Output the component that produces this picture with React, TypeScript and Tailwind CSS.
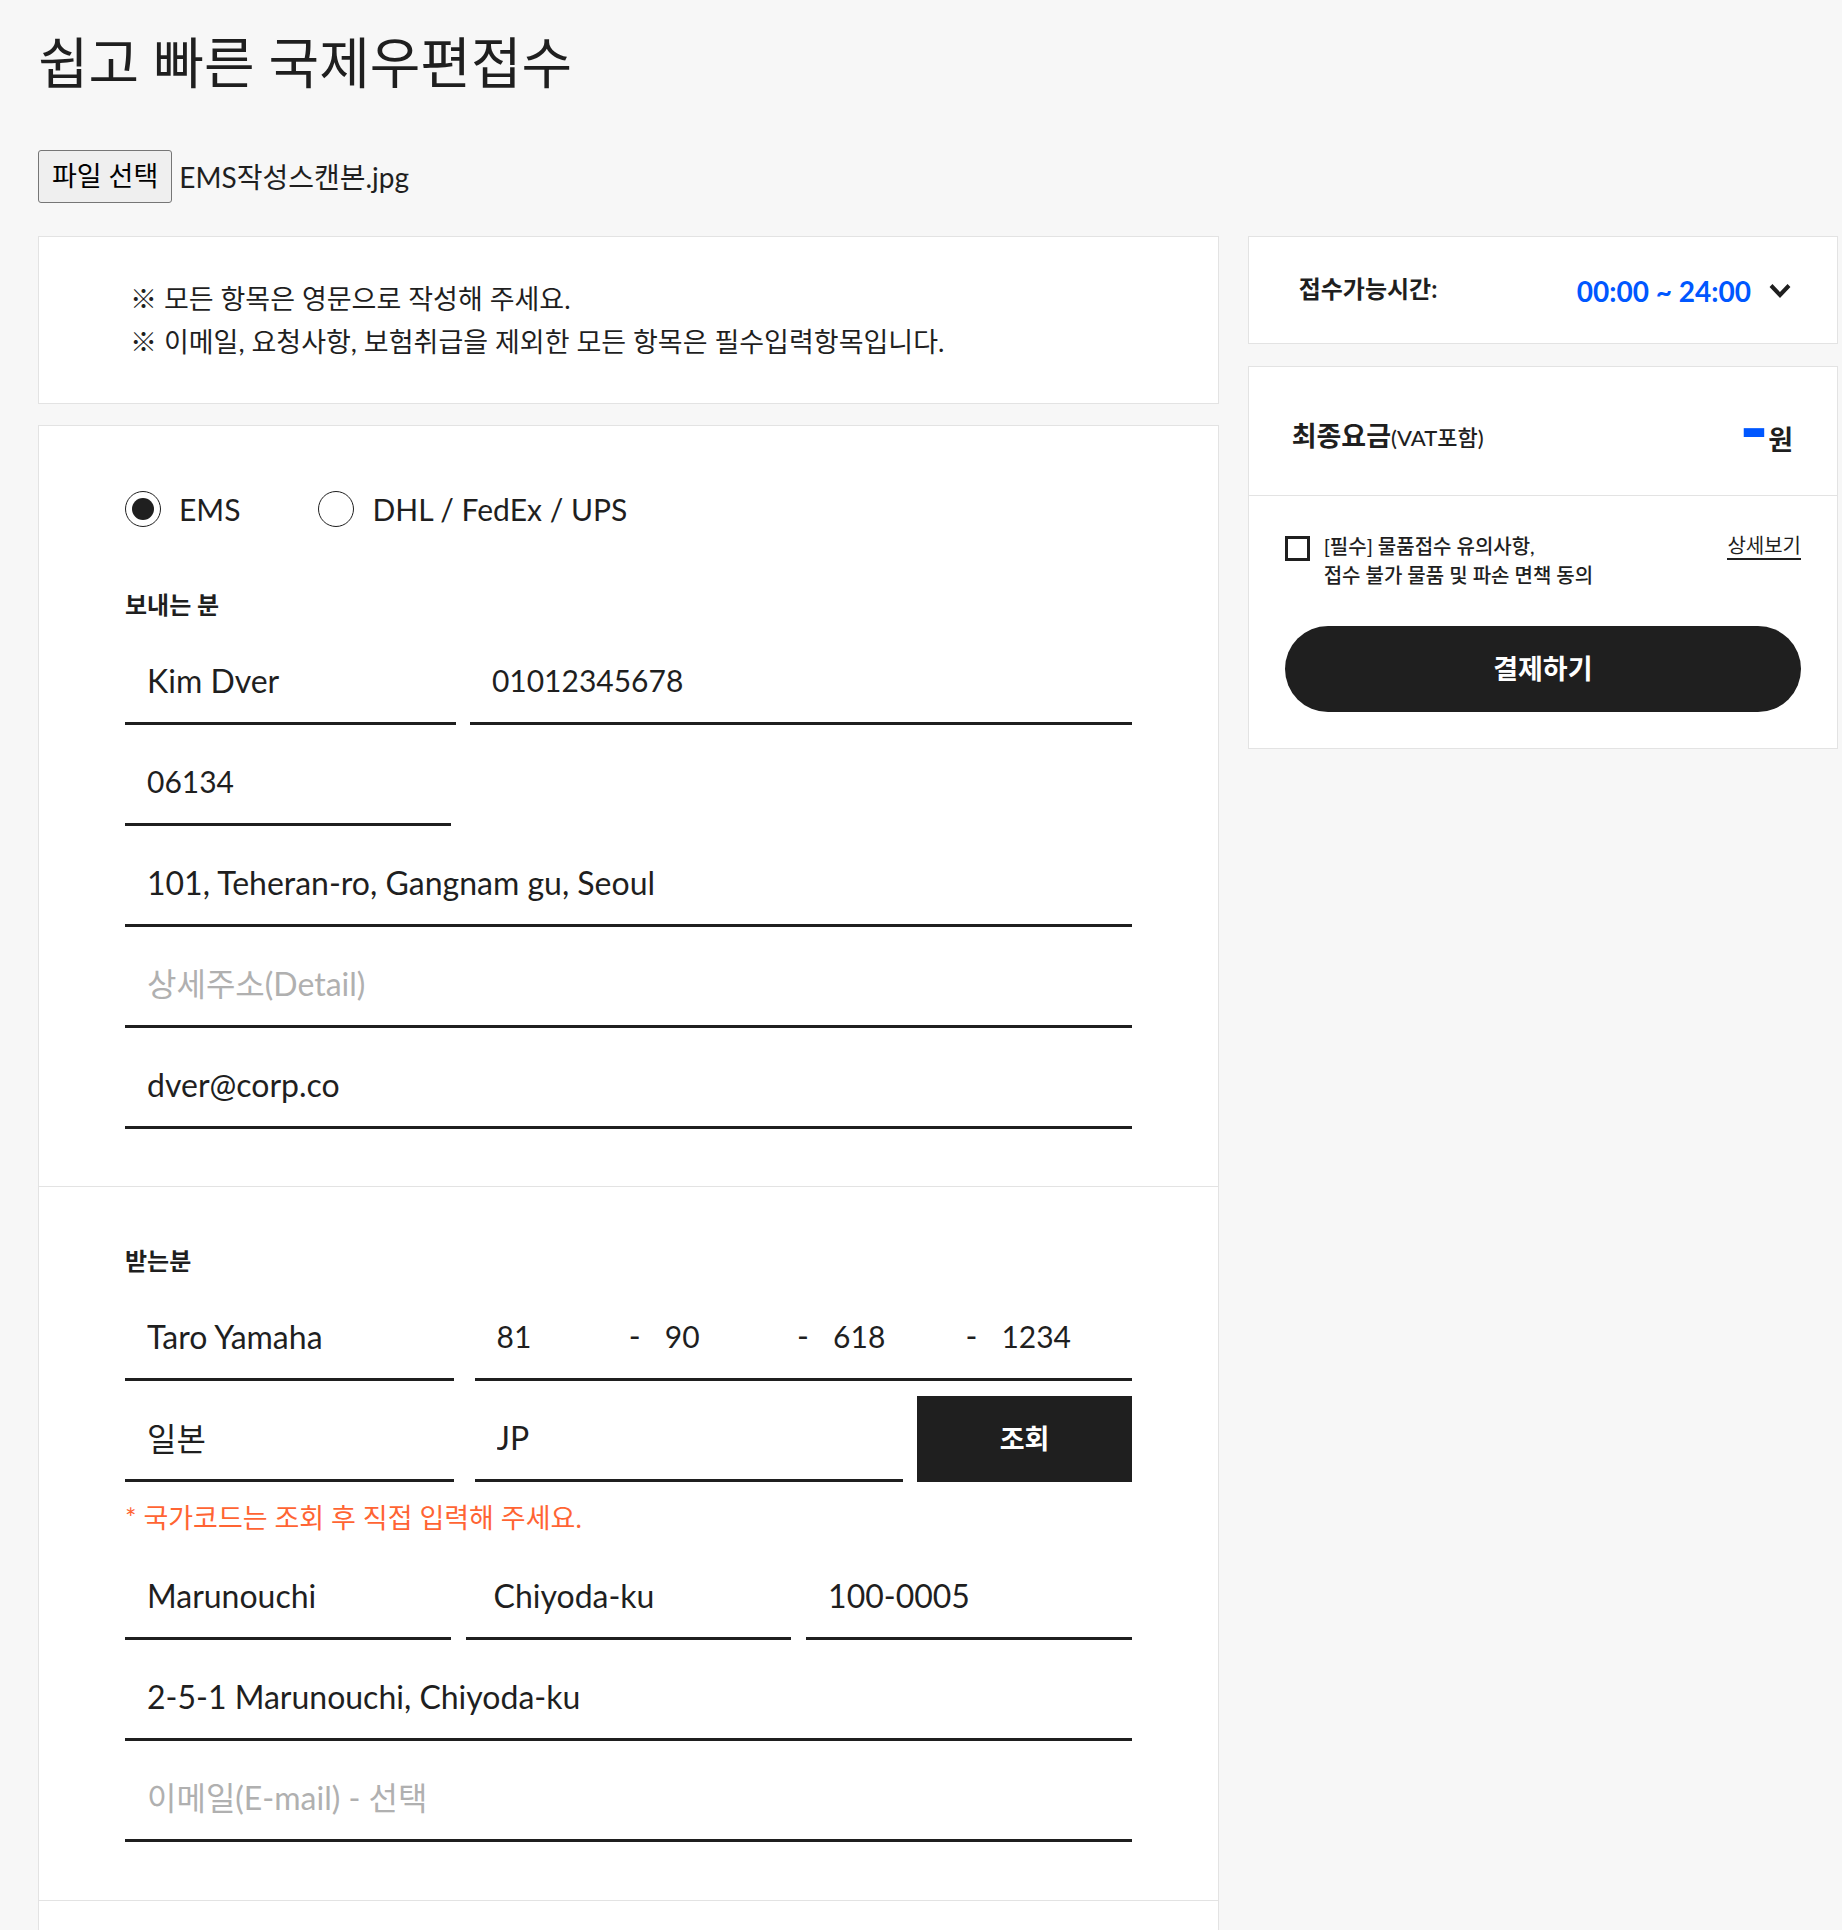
import { useRef, useState } from 'react'
import type { InputHTMLAttributes } from 'react'
import clsx from 'clsx'

type FieldProps = InputHTMLAttributes<HTMLInputElement> & {
  label: string
  inset?: string
  size?: string
}

function Field({ label, inset = 'pl-[22px]', size = 'text-[32px]', ...rest }: FieldProps) {
  return (
    <input
      aria-label={label}
      className={clsx(
        'h-[86px] w-full min-w-0 border-b-3 border-[#1f1f1f] bg-transparent pb-px outline-none placeholder:text-[#b0b0b0]',
        inset,
        size,
      )}
      {...rest}
    />
  )
}

function PhonePart({ label, value }: { label: string; value: string }) {
  return (
    <input
      aria-label={label}
      defaultValue={value}
      className="h-full w-full min-w-0 flex-1 bg-transparent text-[30px] outline-none"
    />
  )
}

function Dash() {
  return <span className="w-[38px] shrink-0 pl-0.5 text-[32px]">-</span>
}

const carriers = ['EMS', 'DHL / FedEx / UPS']

export default function App() {
  const fileInput = useRef<HTMLInputElement>(null)
  const [fileName, setFileName] = useState('EMS작성스캔본.jpg')

  return (
    <div className="h-screen overflow-hidden bg-[#f7f7f7] pr-1 pl-[38px] font-['Lato','Noto_Sans_CJK_KR',sans-serif] text-[#1f1f1f]">
      <h1 className="pt-[22px] text-[55px] leading-[80px]">쉽고 빠른 국제우편접수</h1>

      <div className="mt-12 flex items-center gap-[7px]">
        <button
          type="button"
          onClick={() => fileInput.current?.click()}
          className="h-[53px] rounded-[3px] border border-[#767676] bg-[#efefef] px-[13px] text-[27px] text-black"
        >
          파일 선택
        </button>
        <span className="text-[28px]">{fileName}</span>
        <input
          ref={fileInput}
          type="file"
          aria-label="파일 선택"
          className="hidden"
          onChange={(e) => setFileName(e.target.files?.[0]?.name ?? '')}
        />
      </div>

      <div className="mt-[33px] flex items-start gap-[29px]">
        <main className="flex min-w-0 flex-[2] flex-col gap-[21px]">
          <section className="border border-[#e3e3e3] bg-white px-[91px] py-[40px] text-[27px] leading-[43px]">
            <p>※ 모든 항목은 영문으로 작성해 주세요.</p>
            <p>※ 이메일, 요청사항, 보험취급을 제외한 모든 항목은 필수입력항목입니다.</p>
          </section>

          <form className="border border-[#e3e3e3] bg-white">
            <section className="px-[86px] pt-[65px] pb-[57px]">
              <div className="flex gap-[78px]">
                {carriers.map((name, i) => (
                  <label key={name} className="flex h-9 items-center gap-[18px] text-[30px]">
                    <input
                      type="radio"
                      name="carrier"
                      defaultChecked={i === 0}
                      className="size-9 appearance-none rounded-full border border-[#1f1f1f] bg-clip-content p-[6px] checked:bg-[#1f1f1f]"
                    />
                    {name}
                  </label>
                ))}
              </div>

              <h2 className="mt-[60px] text-[24px] leading-9 font-bold">보내는 분</h2>
              <div className="mt-4 flex flex-col gap-[15px]">
                <div className="grid grid-cols-[1fr_2fr] gap-[14px]">
                  <Field label="이름" defaultValue="Kim Dver" />
                  <Field label="전화번호" defaultValue="01012345678" size="text-[30px]" />
                </div>
                <div className="grid grid-cols-3 gap-[15px]">
                  <Field label="우편번호" defaultValue="06134" size="text-[30px]" />
                </div>
                <Field label="주소" defaultValue="101, Teheran-ro, Gangnam gu, Seoul" />
                <Field label="상세주소" placeholder="상세주소(Detail)" />
                <Field label="이메일" defaultValue="dver@corp.co" />
              </div>
            </section>

            <section className="border-t border-[#e3e3e3] px-[86px] pt-[56px] pb-[58px]">
              <h2 className="text-[24px] leading-9 font-bold">받는분</h2>
              <div className="mt-4 grid grid-cols-[1fr_2fr] gap-x-[21px] gap-y-[15px]">
                <Field label="받는분 이름" defaultValue="Taro Yamaha" />
                <div className="flex h-[86px] items-center border-b-3 border-[#1f1f1f] pb-px pl-[22px]">
                  <PhonePart label="국가번호" value="81" />
                  <Dash />
                  <PhonePart label="지역번호" value="90" />
                  <Dash />
                  <PhonePart label="국번" value="618" />
                  <Dash />
                  <PhonePart label="번호" value="1234" />
                </div>
                <Field label="국가" defaultValue="일본" />
                <div className="grid grid-cols-[2fr_1fr] gap-[14px]">
                  <Field label="국가코드" defaultValue="JP" />
                  <button type="button" className="bg-[#1f1f1f] text-[27px] font-bold text-white">
                    조회
                  </button>
                </div>
              </div>
              <p className="mt-[15px] text-[27px] leading-[42px] text-[#ff6433]">
                * 국가코드는 조회 후 직접 입력해 주세요.
              </p>
              <div className="mt-[15px] flex flex-col gap-[15px]">
                <div className="grid grid-cols-3 gap-[15px]">
                  <Field label="시/도" defaultValue="Marunouchi" />
                  <Field label="구/군" defaultValue="Chiyoda-ku" inset="pl-7" />
                  <Field label="받는분 우편번호" defaultValue="100-0005" />
                </div>
                <Field label="받는분 주소" defaultValue="2-5-1 Marunouchi, Chiyoda-ku" />
                <Field label="받는분 이메일" placeholder="이메일(E-mail) - 선택" />
              </div>
            </section>

            <section className="h-24 border-t border-[#e3e3e3]" />
          </form>
        </main>

        <aside className="flex min-w-0 flex-1 flex-col gap-[22px]">
          <section className="flex h-[108px] items-center justify-between border border-[#e3e3e3] bg-white pr-[46px] pl-[50px]">
            <h2 className="pb-0.5 text-[24px] font-bold">접수가능시간:</h2>
            <button type="button" className="flex items-center gap-[18px] pt-0.5 text-[28px] font-bold text-[#0057ff]">
              00:00 ~ 24:00
              <svg
                viewBox="0 0 22 16"
                className="h-4 w-[22px] text-[#1f1f1f]"
                fill="none"
                stroke="currentColor"
                strokeWidth="4"
                aria-hidden="true"
              >
                <path d="M2 2.5l9 9.5 9-9.5" />
              </svg>
            </button>
          </section>

          <section className="border border-[#e3e3e3] bg-white">
            <div className="flex h-[129px] items-center justify-between border-b border-[#e3e3e3] pt-[10px] pr-[44px] pl-[43px]">
              <h2 className="text-[27px] font-bold">
                최종요금<span className="text-[22px] font-medium">(VAT포함)</span>
              </h2>
              <p className="flex items-baseline pb-1 text-[27px] leading-[40px] font-bold">
                <span className="font-['Inter'] text-[60px] font-black text-[#0057ff]">-</span>원
              </p>
            </div>
            <div className="p-9">
              <div className="flex items-start justify-between">
                <label className="flex items-start gap-[14px] text-[20px] leading-[29px] font-medium">
                  <input
                    type="checkbox"
                    className="mt-1 size-[25px] shrink-0 appearance-none border-3 border-[#1f1f1f] bg-white checked:bg-[#1f1f1f]"
                  />
                  <span>
                    [필수] 물품접수 유의사항,
                    <br />
                    접수 불가 물품 및 파손 면책 동의
                  </span>
                </label>
                <a href="#terms" className="border-b-2 border-[#1f1f1f] text-[20px] leading-[26px]">
                  상세보기
                </a>
              </div>
              <button
                type="button"
                className="mt-9 h-[86px] w-full rounded-full bg-[#1f1f1f] text-[27px] font-bold text-white"
              >
                결제하기
              </button>
            </div>
          </section>
        </aside>
      </div>
    </div>
  )
}
